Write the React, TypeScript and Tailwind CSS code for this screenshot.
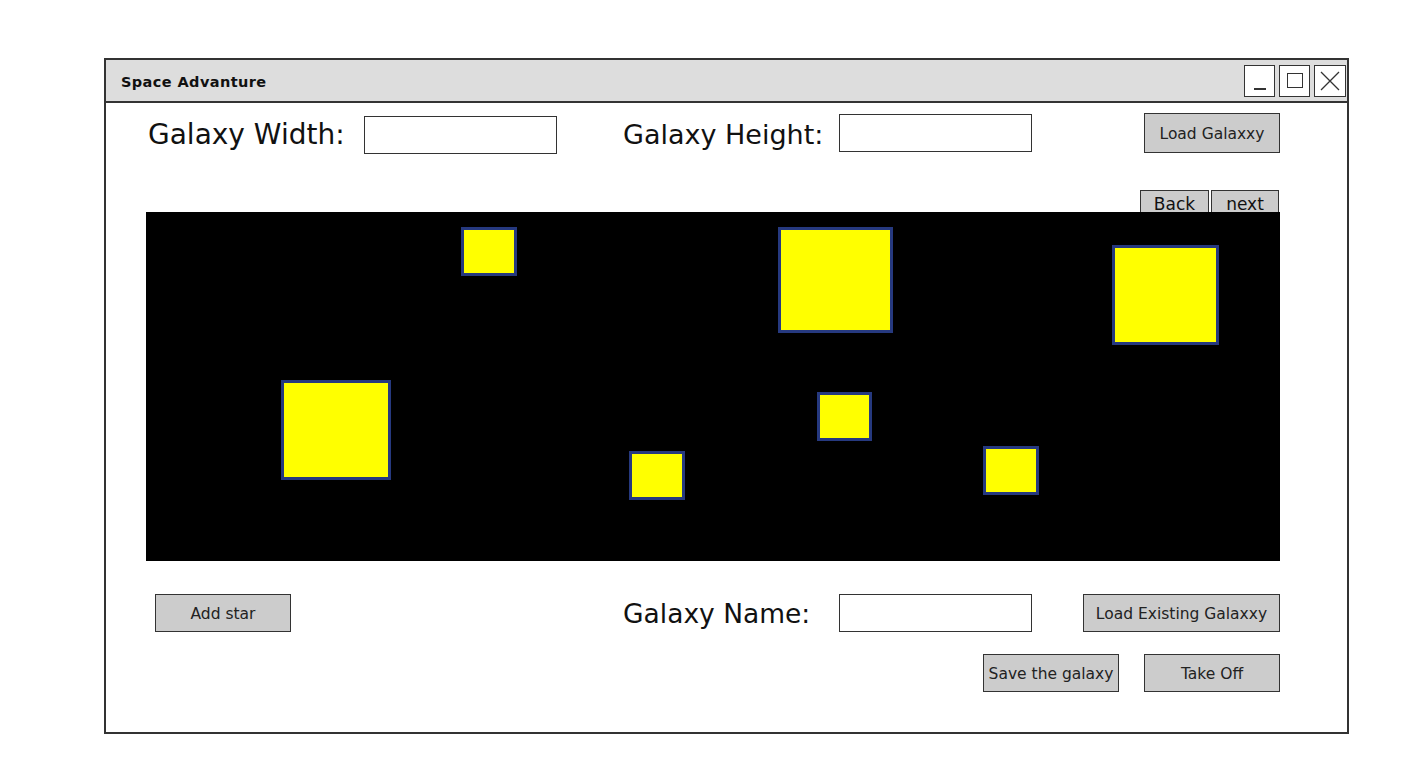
import React from "react";

const font = { fontFamily: '"DejaVu Sans", "Noto Sans", sans-serif' };

function Btn({ children, className }: { children: React.ReactNode; className: string }) {
  return (
    <div
      className={
        "flex items-center justify-center bg-[#cccccc] border-[1.5px] border-[#333333] text-[15.5px] text-[#222] whitespace-nowrap pt-[3px] " +
        className
      }
    >
      {children}
    </div>
  );
}

function Input({ className }: { className: string }) {
  return <div className={"bg-white border-[1.5px] border-[#333333] " + className} />;
}

const stars = [
  { l: 315, t: 15, w: 56, h: 49 },
  { l: 632, t: 15, w: 115, h: 106 },
  { l: 966, t: 33, w: 107, h: 100 },
  { l: 135, t: 168, w: 110, h: 100 },
  { l: 671, t: 180, w: 55, h: 49 },
  { l: 483, t: 239, w: 56, h: 49 },
  { l: 837, t: 234, w: 56, h: 49 },
];

export default function App() {
  return (
    <div className="w-[1427px] h-[777px] bg-white overflow-hidden text-[#111]" style={font}>
      <div className="ml-[104px] mt-[58px] w-[1245px] h-[676px] border-2 border-[#333333] flex flex-col">
        {/* title bar */}
        <div className="h-[43px] bg-[#dddddd] border-b-2 border-[#333333] flex items-center pl-[15px] pr-[1px]">
          <div className="text-[14.5px] font-bold tracking-[0.4px] mt-[5px]">Space Advanture</div>
          <div className="ml-auto flex gap-[4px]">
            <div className="w-[31px] h-[32px] bg-white border-[1.5px] border-[#333] flex items-end justify-center pb-[6px]">
              <div className="w-[12px] h-[1.5px] bg-[#333]" />
            </div>
            <div className="w-[31px] h-[32px] bg-white border-[1.5px] border-[#333] flex items-center justify-center">
              <div className="w-[16px] h-[15px] border-[1.5px] border-[#333]" />
            </div>
            <div className="w-[32px] h-[32px] bg-white border-[1.5px] border-[#333] flex items-center justify-center">
              <svg width="22" height="22" viewBox="0 0 22 22">
                <path d="M2 2 L20 20 M20 2 L2 20" stroke="#333" strokeWidth="1.3" fill="none" />
              </svg>
            </div>
          </div>
        </div>

        {/* body */}
        <div className="flex flex-col pl-[40px] pr-[67px]">
          {/* row 1 */}
          <div className="mt-[10px] h-[40px] flex items-center">
            <div className="w-[218px] pl-[2px] text-[28px] leading-none mt-[4px]">Galaxy Width:</div>
            <Input className="w-[193px] h-[38px] mt-[4px]" />
            <div className="ml-[66px] w-[216px] text-[27px] leading-none mt-[2px]">Galaxy Height:</div>
            <Input className="w-[193px] h-[38px]" />
            <Btn className="ml-auto w-[136px] h-[40px]">Load Galaxxy</Btn>
          </div>

          {/* back/next */}
          <div className="mt-[37px] h-[22px] flex justify-end gap-[2px] pr-[1px]">
            <div className="w-[69px] h-[22px] bg-[#cccccc] border-[1.5px] border-b-0 border-[#333] overflow-hidden flex justify-center">
              <div className="text-[17px] leading-none pt-[5px]">Back</div>
            </div>
            <div className="w-[68px] h-[22px] bg-[#cccccc] border-[1.5px] border-b-0 border-[#333] overflow-hidden flex justify-center">
              <div className="text-[17px] leading-none pt-[5px]">next</div>
            </div>
          </div>

          {/* canvas */}
          <div className="relative w-[1134px] h-[349px] bg-black">
            {stars.map((s, i) => (
              <div
                key={i}
                className="absolute bg-[#ffff00] border-[3px] border-[#26397f]"
                style={{ left: s.l, top: s.t, width: s.w, height: s.h }}
              />
            ))}
          </div>

          {/* row 3 */}
          <div className="mt-[33px] h-[38px] flex items-center">
            <Btn className="ml-[9px] w-[136px] h-[38px]">Add star</Btn>
            <div className="ml-[332px] w-[216px] text-[26.5px] leading-none mt-[2px]">Galaxy Name:</div>
            <Input className="w-[193px] h-[38px]" />
            <Btn className="ml-auto w-[197px] h-[38px]">Load Existing Galaxxy</Btn>
          </div>

          {/* row 4 */}
          <div className="mt-[22px] h-[38px] flex justify-end gap-[25px]">
            <Btn className="w-[136px] h-[38px]">Save the galaxy</Btn>
            <Btn className="w-[136px] h-[38px]">Take Off</Btn>
          </div>
        </div>
      </div>
    </div>
  );
}
